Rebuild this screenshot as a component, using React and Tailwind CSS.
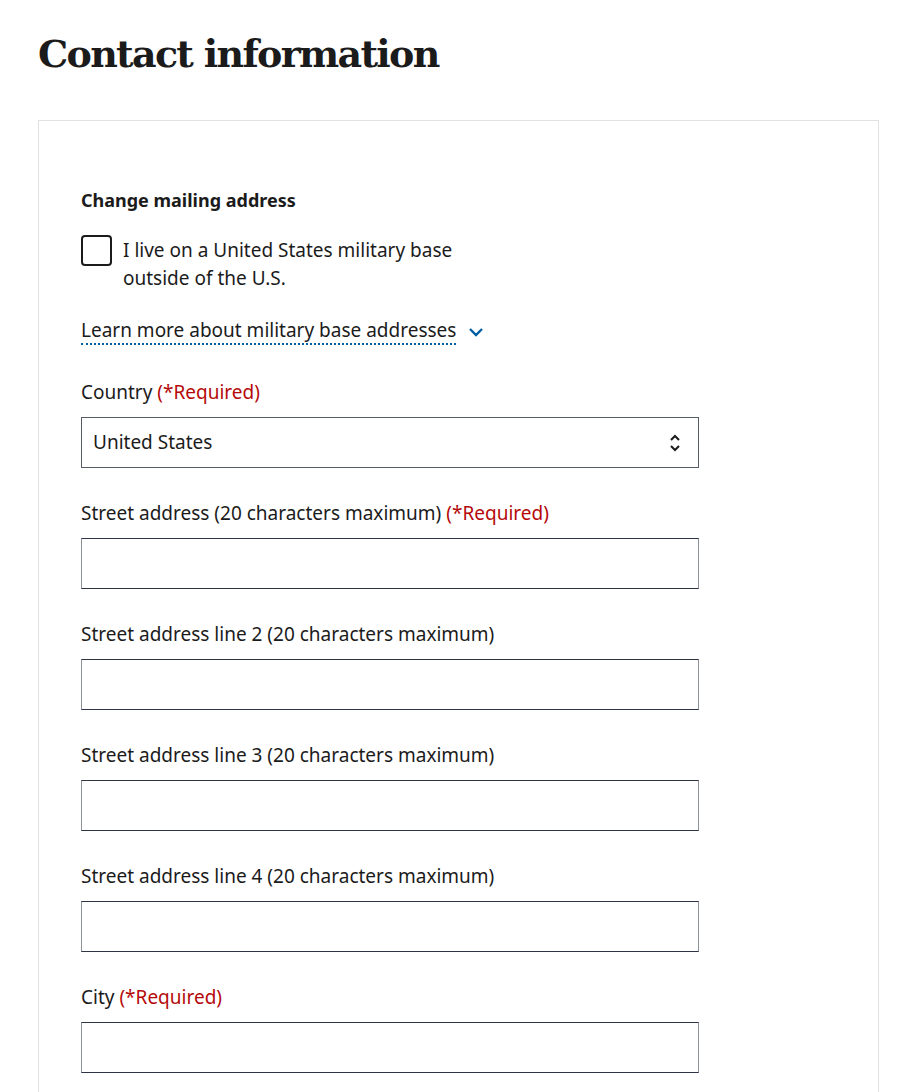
import React from 'react';

const body = { fontFamily: '"Noto Sans", "Lato", sans-serif' };

const Req = () => <span className="text-[#b50909]">(*Required)</span>;

const TextField = ({ label, required }) => (
  <div className="mt-[33px]">
    <label className="block text-[19px] leading-[24px] text-[#1b1b1b]">
      {label} {required && <Req />}
    </label>
    <input
      type="text"
      className="mt-[13px] block h-[51px] w-[618px] border border-x-[#8d9297] border-y-[#2e3444] bg-white outline-none"
    />
  </div>
);

const App = () => {
  return (
    <div className="h-[1092px] overflow-hidden bg-white" style={body}>
      <h1
        className="ml-[38px] pt-[27px] text-[38px] font-bold leading-[54px] text-[#1b1b1b]"
        style={{ fontFamily: '"DejaVu Serif", "Liberation Serif", serif', letterSpacing: '-1.7px' }}
      >
        Contact information
      </h1>

      <div className="mt-[39px] ml-[38px] mr-[21px] border border-[#e2e2e2] px-[42px] pt-[67px] pb-20">
        <p className="text-[18px] font-bold leading-[24px] text-[#1b1b1b]">Change mailing address</p>

        <label className="mt-[24px] flex items-start gap-[11px] text-[19px] leading-[28px] text-[#1b1b1b]">
          <span className="-mt-[1px] block h-[31px] w-[31px] shrink-0 rounded-[4px] border-2 border-[#1b1b1b]" />
          <span className="w-[345px]">I live on a United States military base outside of the U.S.</span>
        </label>

        <button className="mt-[26px] flex items-center gap-[12px] text-[19px] leading-[24px] text-[#1b1b1b]">
          <span className="border-b-2 border-dotted border-[#005ea2] pb-[1px]">Learn more about military base addresses</span>
          <svg width="16" height="10" viewBox="0 0 16 10" className="mt-[1px]">
            <path d="M2 2l6 6 6-6" fill="none" stroke="#005ea2" strokeWidth="2.4" />
          </svg>
        </button>

        <div className="mt-[35px]">
          <label className="block text-[19px] leading-[24px] text-[#1b1b1b]">
            Country <Req />
          </label>
          <div className="mt-[13px] flex h-[51px] w-[618px] items-center justify-between border border-[#565c65] pl-[11px] pr-[17px] text-[19px] text-[#1b1b1b]">
            <span>United States</span>
            <svg width="12" height="20" viewBox="0 0 12 20">
              <path d="M2 7l4-4 4 4M2 13l4 4 4-4" fill="none" stroke="#1b1b1b" strokeWidth="2" />
            </svg>
          </div>
        </div>

        <TextField label="Street address (20 characters maximum)" required />
        <TextField label="Street address line 2 (20 characters maximum)" />
        <TextField label="Street address line 3 (20 characters maximum)" />
        <TextField label="Street address line 4 (20 characters maximum)" />
        <TextField label="City" required />
      </div>
    </div>
  );
};

export default App;
